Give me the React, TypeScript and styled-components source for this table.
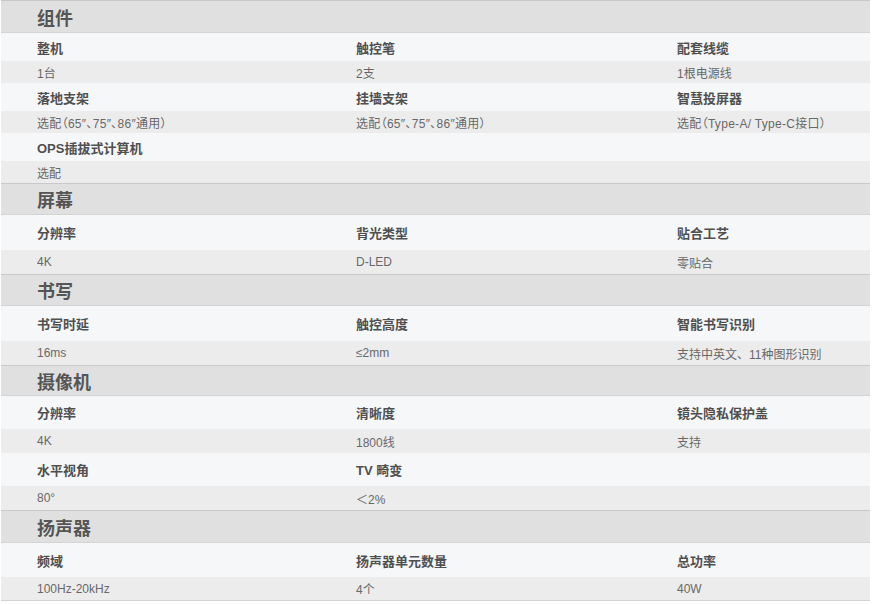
import styled, { createGlobalStyle } from 'styled-components';

const GlobalStyle = createGlobalStyle`
  body {
    margin: 0;
    background: #ffffff;
    font-family: "Liberation Sans", "Noto Sans CJK SC", sans-serif;
  }
`;

const Wrapper = styled.div`
  margin-left: 1px;
  width: 869px;
  border-bottom: 1px solid #d2d2d2;
`;

const Head = styled.div<{ h: number }>`
  height: ${(p) => p.h}px;
  box-sizing: border-box;
  display: flex;
  align-items: center;
  padding-left: 36px;
  background: #e0e0e0;
  border-top: 1px solid #c9c9c9;
  border-bottom: 1px solid #d4d4d4;
  font-size: 18px;
  font-weight: 700;
  color: #555;
`;

const Row = styled.div<{ h: number; kind: 'label' | 'value' }>`
  height: ${(p) => p.h}px;
  display: grid;
  grid-template-columns: 319px 321px 1fr;
  align-items: center;
  padding-left: 36px;
  background: ${(p) => (p.kind === 'label' ? '#f6f7f9' : '#ececec')};
  font-size: ${(p) => (p.kind === 'label' ? '13px' : '12px')};
  font-weight: ${(p) => (p.kind === 'label' ? 700 : 400)};
  color: ${(p) => (p.kind === 'label' ? '#505050' : '#686868')};
  white-space: nowrap;
`;

// parenthesised notes use proportional CJK punctuation
const Cell = styled.span<{ tight?: boolean }>`
  font-feature-settings: ${(p) => (p.tight ? '"palt"' : 'normal')};
  letter-spacing: ${(p) => (p.tight ? '0.3px' : '0')};
`;

type Section = {
  title: string;
  headH: number;
  labelH: number;
  valueH: number;
  rows: { labels: string[]; values: string[] }[];
};

const sections: Section[] = [
  {
    title: '组件', headH: 33, labelH: 28, valueH: 22,
    rows: [
      { labels: ['整机', '触控笔', '配套线缆'], values: ['1台', '2支', '1根电源线'] },
      { labels: ['落地支架', '挂墙支架', '智慧投屏器'], values: ['选配（65″、75″、86″通用）', '选配（65″、75″、86″通用）', '选配（Type-A/ Type-C接口）'] },
      { labels: ['OPS插拔式计算机', '', ''], values: ['选配', '', ''] },
    ],
  },
  {
    title: '屏幕', headH: 32, labelH: 35, valueH: 24,
    rows: [{ labels: ['分辨率', '背光类型', '贴合工艺'], values: ['4K', 'D-LED', '零贴合'] }],
  },
  {
    title: '书写', headH: 32, labelH: 35, valueH: 24,
    rows: [{ labels: ['书写时延', '触控高度', '智能书写识别'], values: ['16ms', '≤2mm', '支持中英文、11种图形识别'] }],
  },
  {
    title: '摄像机', headH: 31, labelH: 33, valueH: 24,
    rows: [
      { labels: ['分辨率', '清晰度', '镜头隐私保护盖'], values: ['4K', '1800线', '支持'] },
      { labels: ['水平视角', 'TV 畸变', ''], values: ['80°', '＜2%', ''] },
    ],
  },
  {
    title: '扬声器', headH: 33, labelH: 34, valueH: 23,
    rows: [{ labels: ['频域', '扬声器单元数量', '总功率'], values: ['100Hz-20kHz', '4个', '40W'] }],
  },
];

function App() {
  return (
    <>
      <GlobalStyle />
      <Wrapper>
        {sections.map((s) => (
          <div key={s.title}>
            <Head h={s.headH}>{s.title}</Head>
            {s.rows.map((r, i) => (
              <div key={i}>
                <Row h={s.labelH} kind="label">
                  {r.labels.map((t, j) => <Cell key={j}>{t}</Cell>)}
                </Row>
                <Row h={s.valueH} kind="value">
                  {r.values.map((t, j) => (
                    <Cell key={j} tight={t.includes('（')}>{t}</Cell>
                  ))}
                </Row>
              </div>
            ))}
          </div>
        ))}
      </Wrapper>
    </>
  );
}

export default App;
